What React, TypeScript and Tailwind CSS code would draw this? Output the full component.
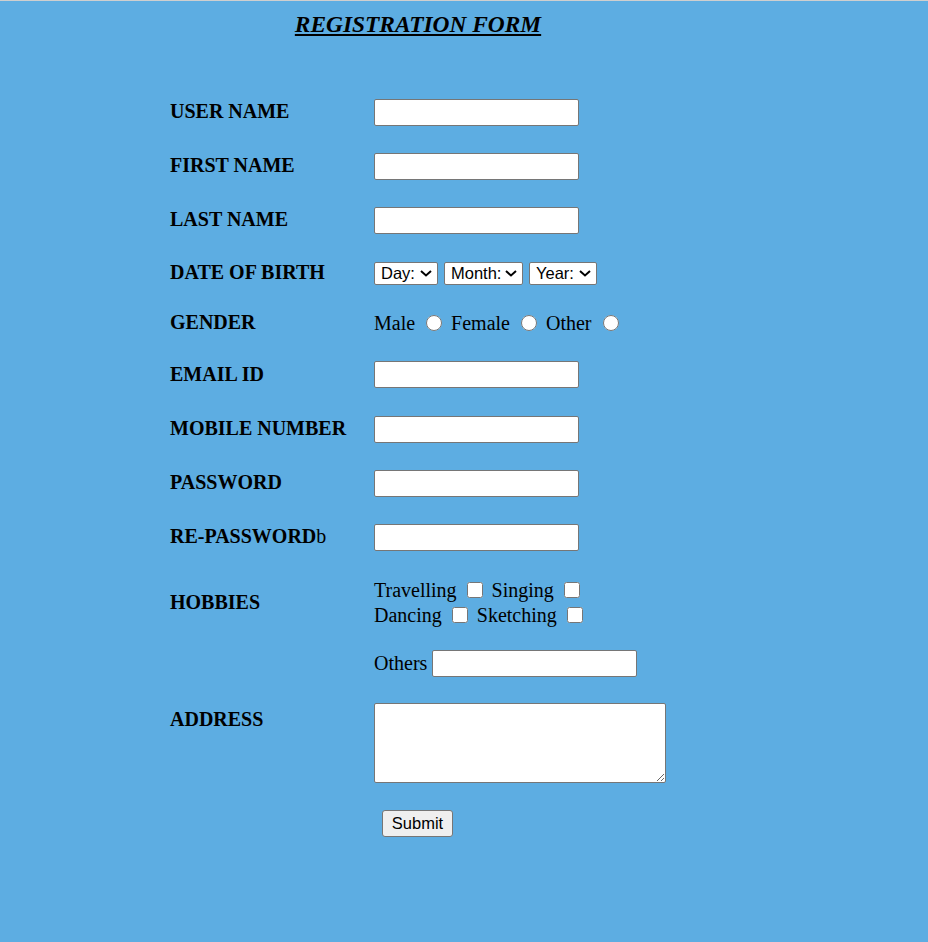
import React from "react";

const serif = "font-['Liberation_Serif','Times_New_Roman',serif]";
const sans = "font-['Liberation_Sans',Arial,sans-serif]";

const TextBox = ({ w = "w-[205px]" }: { w?: string }) => (
  <input
    type="text"
    className={`${w} h-[27px] bg-white border border-[#767676] rounded-[2px] px-1 ${sans} text-[16px]`}
  />
);

const Row = ({
  label,
  h,
  children,
}: {
  label: React.ReactNode;
  h: string;
  children?: React.ReactNode;
}) => (
  <div className={`flex items-center ${h}`}>
    <div className="w-[204px] shrink-0 font-bold leading-[23px] -mt-[1px]">{label}</div>
    <div className="flex items-center">{children}</div>
  </div>
);

const Radio = ({ name }: { name: string }) => (
  <input type="radio" name={name} className="w-4 h-4 ml-[11px] mr-[9px] m-0" />
);

const Check = () => (
  <input type="checkbox" className="w-4 h-4 ml-[10px] mr-[9px]" />
);

// select with a drawn chevron, the native arrow is too small at this size
const Select = ({ label, w }: { label: string; w: string }) => (
  <div className="relative flex h-[23px]">
    <select
      className={`block ${w} h-[23px] appearance-none bg-white border border-[#767676] rounded-[2px] ${sans} text-[16.5px] leading-[19px] py-0 text-black pl-[6px]`}
      defaultValue=""
    >
      <option value="">{label}</option>
    </select>
    <svg
      className="absolute right-[6px] top-[8px] w-[12px] h-[7px] pointer-events-none"
      viewBox="0 0 12 7"
      fill="none"
    >
      <polyline points="1,1 6,5.5 11,1" stroke="#000" strokeWidth="2" />
    </svg>
  </div>
);

export default function App() {
  return (
    <div
      className={`min-h-screen bg-[#5dade2] border-t border-[#cfcfcf] text-black ${serif} text-[20px]`}
    >
      <div className="pl-[170px]">
        <h3 className="w-[496px] mt-[10px] text-center text-[23.4px] leading-[26px] font-bold italic underline">
          REGISTRATION FORM
        </h3>

        <div className="mt-[48px]">
          <Row label="USER NAME" h="h-[54px]">
            <TextBox />
          </Row>
          <Row label="FIRST NAME" h="h-[54px]">
            <TextBox />
          </Row>
          <Row label="LAST NAME" h="h-[54px]">
            <TextBox />
          </Row>
          <Row label="DATE OF BIRTH" h="h-[52px]">
            <div className="flex gap-[6px]">
              <Select label="Day:" w="w-[64px]" />
              <Select label="Month:" w="w-[79px]" />
              <Select label="Year:" w="w-[68px]" />
            </div>
          </Row>
          <Row label="GENDER" h="h-[48px]">
            <span className="leading-[23px]">Male</span>
            <Radio name="g" />
            <span className="leading-[23px]">Female</span>
            <Radio name="g" />
            <span className="leading-[23px]">Other</span>
            <Radio name="g" />
          </Row>
          <Row label="EMAIL ID" h="h-[55px]">
            <TextBox />
          </Row>
          <Row label="MOBILE NUMBER" h="h-[54px]">
            <TextBox />
          </Row>
          <Row label="PASSWORD" h="h-[54px]">
            <TextBox />
          </Row>
          <Row
            label={
              <>
                RE-PASSWORD<span className="font-normal">b</span>
              </>
            }
            h="h-[54px]"
          >
            <TextBox />
          </Row>
          <Row label="HOBBIES" h="h-[78px]">
            <div className="flex flex-col -mt-[1px]">
              <div className="flex items-center h-[25px]">
                <span>Travelling</span>
                <Check />
                <span>Singing</span>
                <Check />
              </div>
              <div className="flex items-center h-[25px]">
                <span>Dancing</span>
                <Check />
                <span>Sketching</span>
                <Check />
              </div>
            </div>
          </Row>
          <Row label="" h="h-[42px]">
            <span className="mr-[5px]">Others</span>
            <TextBox />
          </Row>
          <div className="flex items-start pt-[19px]">
            <div className="w-[204px] shrink-0 font-bold leading-[23px] mt-[5px]">ADDRESS</div>
            <textarea className="w-[292px] h-[80px] bg-white border border-[#767676] rounded-[2px]" />
          </div>
          <div className="pl-[212px] mt-[24px]">
            <button
              type="button"
              className={`w-[71px] h-[27px] bg-[#efefef] border border-[#767676] rounded-[3px] ${sans} text-[16.5px] leading-none`}
            >
              Submit
            </button>
          </div>
        </div>
      </div>
    </div>
  );
}
